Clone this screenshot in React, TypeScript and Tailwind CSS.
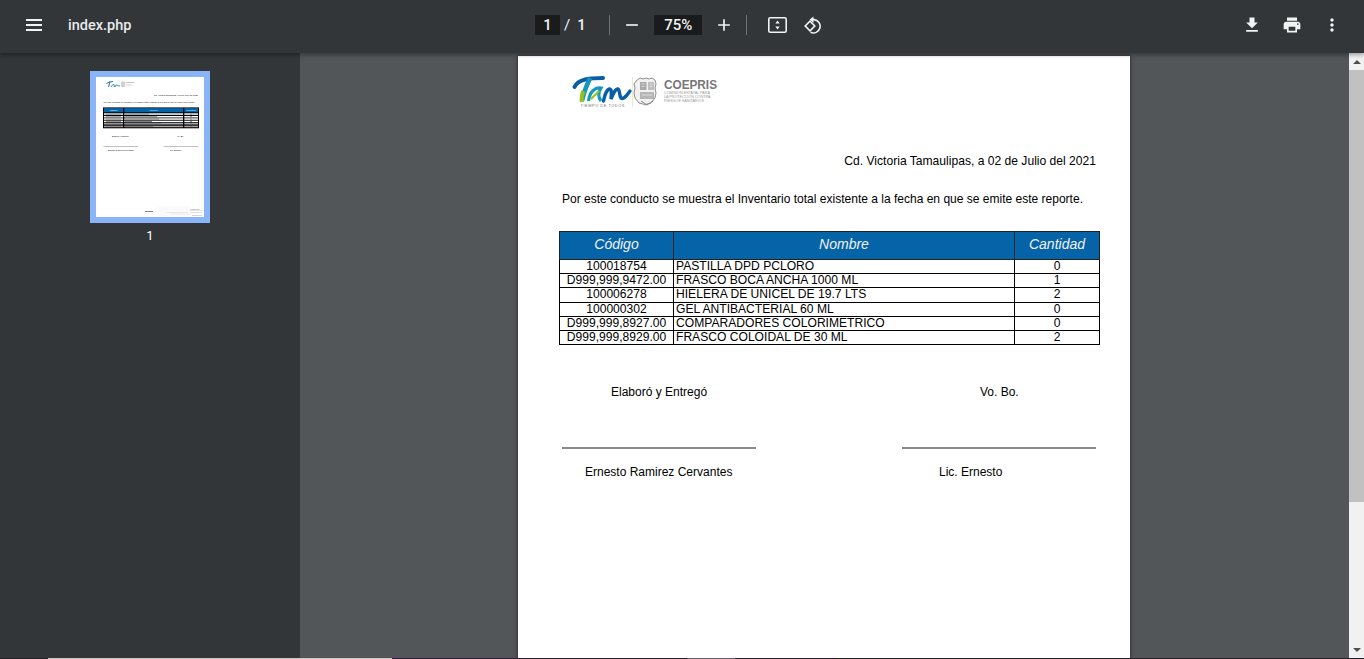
import React from "react";

const rows = [
  ["100018754", "PASTILLA DPD PCLORO", "0"],
  ["D999,999,9472.00", "FRASCO BOCA ANCHA 1000 ML", "1"],
  ["100006278", "HIELERA DE UNICEL DE 19.7 LTS", "2"],
  ["100000302", "GEL ANTIBACTERIAL 60 ML", "0"],
  ["D999,999,8927.00", "COMPARADORES COLORIMETRICO", "0"],
  ["D999,999,8929.00", "FRASCO COLOIDAL DE 30 ML", "2"],
];

function Icon({ d, size = 20, className }: { d: string; size?: number; className?: string }) {
  return (
    <svg viewBox="0 0 24 24" width={size} height={size} fill="#f1f3f4" className={className}>
      <path d={d} />
    </svg>
  );
}

function Divider() {
  return <div className="w-px h-[20px] bg-[#6f7275]" />;
}

function Toolbar() {
  return (
    <header className="h-[53px] pb-[3px] shrink-0 bg-[#323639] flex items-center relative z-10 shadow-[0_2px_4px_rgba(0,0,0,0.35)] text-[#f1f3f4] font-['Roboto',sans-serif]">
      <div className="w-[535px] shrink-0 flex items-center pl-[22px]">
        <Icon size={24} d="M4 18h16v-2H4v2zm0-5h16v-2H4v2zm0-7v2h16V6H4z" />
        <span className="ml-[22px] pt-[1px] text-[14.5px] font-medium text-[#e8eaed]">index.php</span>
      </div>
      <div className="flex items-center text-[15px]">
        <div className="w-[25px] h-[20px] bg-[#191b1c] flex items-center justify-center font-medium">1</div>
        <span className="ml-[4px]">/</span>
        <span className="ml-[7px] w-[32px] font-medium">1</span>
        <Divider />
        <Icon d="M19 13H5v-2h14v2z" className="ml-[12px]" />
        <div className="ml-[12px] w-[48px] h-[20px] bg-[#191b1c] flex items-center justify-center font-medium">75%</div>
        <Icon d="M19 13h-6v6h-2v-6H5v-2h6V5h2v6h6v2z" className="ml-[12px]" />
        <div className="ml-[12px]"><Divider /></div>
        <svg viewBox="0 0 19 16" width="19" height="16" className="ml-[21px]" fill="none">
          <rect x="0.8" y="0.8" width="17.4" height="14.4" rx="1.5" stroke="#f1f3f4" strokeWidth="1.6" />
          <path d="M9.5 3.5 11.7 6.4H7.3zM9.5 12.5 7.3 9.6h4.4z" fill="#f1f3f4" />
        </svg>
        <svg viewBox="0 0 18 18" width="18" height="18" className="ml-[17px]" fill="none">
          <path d="M8 3.6h2a6.7 6.7 0 1 1-3.5 12.7" stroke="#f1f3f4" strokeWidth="1.6" />
          <path d="M9.5 0.4 5.6 3.6 9.5 6.9z" fill="#f1f3f4" />
          <rect x="2.6" y="6.6" width="6.8" height="6.8" transform="rotate(45 6 10)" stroke="#f1f3f4" strokeWidth="1.6" fill="#323639" />
        </svg>
      </div>
      <div className="ml-auto flex items-center gap-[20px] pr-[22px]">
        <Icon d="M19 9h-4V3H9v6H5l7 7 7-7zM5 18v2h14v-2H5z" />
        <Icon d="M19 8H5c-1.66 0-3 1.34-3 3v6h4v4h12v-4h4v-6c0-1.66-1.34-3-3-3zm-3 11H8v-5h8v5zm3-7c-.55 0-1-.45-1-1s.45-1 1-1 1 .45 1 1-.45 1-1 1zm-1-9H6v4h12V3z" />
        <Icon d="M12 8c1.1 0 2-.9 2-2s-.9-2-2-2-2 .9-2 2 .9 2 2 2zm0 2c-1.1 0-2 .9-2 2s.9 2 2 2 2-.9 2-2-.9-2-2-2zm0 6c-1.1 0-2 .9-2 2s.9 2 2 2 2-.9 2-2-.9-2-2-2z" />
      </div>
    </header>
  );
}

function ThumbPage() {
  const lines = [36.3, 39, 41.3, 43.7, 46, 48.7];
  return (
    <svg viewBox="0 0 108 140" width="108" height="140" className="block bg-white" fontFamily="'Liberation Sans', sans-serif">
      <path d="M10.5 6.5Q13 4.5 17 4.5M14 5L12.5 10" stroke="#1c6fa8" strokeWidth="1" fill="none" />
      <path d="M15 10Q16.5 7 18 7.5L18.5 10M19 10Q20 7 21 8T24 9" stroke="#2a86a8" strokeWidth="0.9" fill="none" />
      <rect x="25" y="4.5" width="4" height="5.5" fill="#d0d0d0" />
      <text x="29.5" y="6.3" fontSize="1.9" fontWeight="700" fill="#777">COEPRIS</text>
      <rect x="29.5" y="7.4" width="6" height="0.5" fill="#ccc" />
      <rect x="29.5" y="8.6" width="6" height="0.5" fill="#ccc" />
      <g fontSize="2.12" fill="#000">
        <text x="102" y="18.9" textAnchor="end">Cd. Victoria Tamaulipas, a 02 de Julio del 2021</text>
        <text x="7.5" y="25.6">Por este conducto se muestra el Inventario total existente a la fecha en que se emite este reporte.</text>
        <text x="16" y="59.8">Elaboró y Entregó</text>
        <text x="81" y="59.8">Vo. Bo.</text>
        <text x="12" y="73.8">Ernesto Ramirez Cervantes</text>
        <text x="74" y="73.8">Lic. Ernesto</text>
      </g>
      <rect x="7.5" y="69.3" width="34.5" height="0.7" fill="#aaa" />
      <rect x="67.5" y="69.3" width="35" height="0.7" fill="#aaa" />

      <rect x="7" y="30.3" width="96" height="21" fill="#000" />
      <rect x="7" y="30.3" width="96" height="0.8" fill="#777" />
      <rect x="8" y="31.1" width="19" height="4.2" fill="#0563a7" />
      <rect x="28.3" y="31.1" width="58.7" height="4.2" fill="#0563a7" />
      <rect x="88.3" y="31.1" width="13.7" height="4.2" fill="#0563a7" />
      <g fontSize="2.4" fontStyle="italic" fill="#d8e6f2" textAnchor="middle">
        <text x="17.5" y="34">Código</text>
        <text x="57.5" y="34">Nombre</text>
        <text x="95" y="34">Cantidad</text>
      </g>
      {lines.map((y, i) => (
        <g key={y}>
          <rect x="8" y={y} width="19" height="1.5" fill={i > 3 ? "#aaa" : "#fff"} />
          <rect x="28.3" y={y} width="58.7" height="1.5" fill={i > 3 ? "#aaa" : "#fff"} />
          <rect x="88.3" y={y} width="13.7" height="1.5" fill={i > 3 ? "#aaa" : "#fff"} />
          <rect x="10" y={y + 0.3} width="15" height="0.9" fill="#888" />
          <rect x="29" y={y + 0.3} width={[24, 32, 34, 27, 36, 28][i]} height="0.9" fill="#777" />
          <rect x="94" y={y + 0.3} width="2" height="0.9" fill="#888" />
        </g>
      ))}

      <rect x="49" y="134" width="8" height="0.8" fill="#666" />
      <rect x="62" y="129" width="32" height="10" fill="#fafafa" />
      <rect x="70" y="135" width="22" height="0.6" fill="#ddd" />
      <rect x="75" y="136.7" width="18" height="0.6" fill="#e2e2e2" />
      <text x="94" y="132.6" fontSize="2" fontWeight="700" fill="#888">COEPRIS</text>
      <rect x="94" y="133.5" width="12" height="0.6" fill="#ccc" />
      <rect x="94" y="135" width="12" height="0.6" fill="#ccc" />
      <rect x="96" y="138" width="10" height="0.6" fill="#bbb" />
    </svg>
  );
}

function Sidebar() {
  return (
    <aside className="w-[300px] shrink-0 bg-[#323639] flex flex-col items-center pt-[18px]">
      <div className="border-[6px] border-[#8ab4f8]">
        <ThumbPage />
      </div>
      <span className="mt-[5px] text-[13px] leading-[16px] text-white font-['Roboto',sans-serif]">1</span>
    </aside>
  );
}

function Logo() {
  return (
    <svg viewBox="0 0 160 42" width="160" height="42" className="block" fontFamily="'Liberation Sans', sans-serif">
      <path d="M9.5 17C13 9 25 8 38 8" stroke="#0a5ea8" strokeWidth="4" fill="none" strokeLinecap="round" />
      <path d="M25 8C21 17 18 24 17 31" stroke="#1597bb" strokeWidth="4.6" fill="none" />
      <path d="M18.5 21C16.5 25 16.3 28 17 32" stroke="#96c11f" strokeWidth="4" fill="none" />
      <path d="M23.5 31C24.5 22 30 17 36 18C33 23 33 27 36 31" stroke="#149ac0" strokeWidth="3.2" fill="none" />
      <path d="M26 29C29 26 31 24 34 21" stroke="#96c11f" strokeWidth="2.2" fill="none" />
      <path d="M38.5 31C40.5 21 44 17 46 20C47 24 46 27 46 29C48 24 50 19 53 19C55 20 54 25 56 28C59 30 62 25 65 21" stroke="#0a5ea8" strokeWidth="3.4" fill="none" strokeLinecap="round" />
      <text x="15.5" y="36.6" fontSize="3.9" letterSpacing="0.55" fill="#777">TIEMPO DE TODOS</text>
      <rect x="67" y="7" width="0.7" height="30" fill="#dfe6a8" />
      <path d="M72 10l3-2 3 1 3-1 3 1 3-1 3 2 1 4-1 4 1 5-1 5-4 5-4 1-2 1-2-1-4-1-4-5-1-5 1-5-1-4z" fill="#f1f1f1" stroke="#8f8f8f" strokeWidth="1" />
      <rect x="75" y="12" width="6.5" height="8" fill="#aaa" />
      <rect x="83" y="12" width="6" height="8" fill="#bdbdbd" />
      <rect x="75" y="22" width="14" height="7" fill="#b5b5b5" />
      <path d="M76.5 14h3M76.5 16.5h3M84.5 14h3M84.5 16.5h3M77 25h10" stroke="#eee" strokeWidth="0.7" />
      <path d="M76 31l6 4 6-4" stroke="#888" fill="none" />
      <text x="99" y="19" fontSize="13" fontWeight="700" fill="#777" textLength="53" lengthAdjust="spacingAndGlyphs">COEPRIS</text>
      <g fontSize="3.7" fill="#999">
        <text x="99" y="24">COMISIÓN ESTATAL PARA</text>
        <text x="99" y="28">LA PROTECCIÓN CONTRA</text>
        <text x="99" y="32">RIESGOS SANITARIOS</text>
      </g>
    </svg>
  );
}

function DocPage() {
  return (
    <div className="w-[612px] h-[700px] shrink-0 bg-white shadow-[0_0_4px_rgba(0,0,0,0.6)] text-black font-['Liberation_Sans',Arial,sans-serif] text-[12px] leading-[14px]">
      <div className="pl-[47px] pt-[14px]">
        <Logo />
      </div>
      <p className="mt-[42px] pr-[34px] text-right text-[12.1px]">Cd. Victoria Tamaulipas, a 02 de Julio del 2021</p>
      <p className="mt-[24px] pl-[44px] text-[12.03px]">Por este conducto se muestra el Inventario total existente a la fecha en que se emite este reporte.</p>
      <table className="mt-[25px] ml-[41px] w-[540px] table-fixed border-collapse text-[12.1px] leading-[13px]">
        <colgroup>
          <col className="w-[114px]" />
          <col className="w-[341px]" />
          <col className="w-[85px]" />
        </colgroup>
        <thead>
          <tr className="h-[28px] bg-[#0563a7] text-[#f2f2f2] text-[14px] italic">
            <th className="border border-[#222] font-normal pb-[2px]">Código</th>
            <th className="border border-[#222] font-normal pb-[2px]">Nombre</th>
            <th className="border border-[#222] font-normal pb-[2px]">Cantidad</th>
          </tr>
        </thead>
        <tbody>
          {rows.map((r) => (
            <tr key={r[0] + r[1]} className="h-[14.2px]">
              <td className="border border-black p-0 text-center">{r[0]}</td>
              <td className="border border-black p-0 pl-[2px]">{r[1]}</td>
              <td className="border border-black p-0 text-center">{r[2]}</td>
            </tr>
          ))}
        </tbody>
      </table>
      <div className="mt-[40px] flex">
        <div className="ml-[44px] w-[194px]">
          <p className="pl-[49px]">Elaboró y Entregó</p>
          <div className="mt-[48px] h-[2px] bg-[#8a8a8a]" />
          <p className="mt-[16px] pl-[23px]">Ernesto Ramirez Cervantes</p>
        </div>
        <div className="ml-[146px] w-[194px]">
          <p className="pl-[78px]">Vo. Bo.</p>
          <div className="mt-[48px] h-[2px] bg-[#8a8a8a]" />
          <p className="mt-[16px] pl-[37px]">Lic. Ernesto</p>
        </div>
      </div>
    </div>
  );
}

function Scrollbar() {
  return (
    <div className="w-[15px] shrink-0 bg-[#f1f1f1] flex flex-col">
      <div className="h-[17px] flex items-center justify-center">
        <div className="w-0 h-0 border-x-[4px] border-x-transparent border-b-[4px] border-b-[#505050]" />
      </div>
      <div className="h-[432px] bg-[#c1c1c1]" />
      <div className="mt-auto h-[17px] flex items-center justify-center">
        <div className="w-0 h-0 border-x-[4px] border-x-transparent border-t-[4px] border-t-[#505050]" />
      </div>
    </div>
  );
}

export default function App() {
  return (
    <div className="w-[1364px] h-[659px] overflow-hidden flex flex-col bg-[#323639]">
      <Toolbar />
      <div className="flex-1 min-h-0 flex">
        <Sidebar />
        <main className="flex-1 min-w-0 bg-[#525659] flex justify-center pt-[3px] pr-[1px] overflow-hidden">
          <DocPage />
        </main>
        <Scrollbar />
      </div>
      <div className="h-px shrink-0 flex bg-[#222226] relative z-10">
        <div className="w-[48px] bg-[#202124]" />
        <div className="w-[344px] bg-[#c8c8c8]" />
        <div className="w-[295px] bg-[#2d1a3d]" />
        <div className="w-[48px] bg-[#6a5a78]" />
        <div className="w-[100px] bg-[#2d1a3d]" />
      </div>
    </div>
  );
}
